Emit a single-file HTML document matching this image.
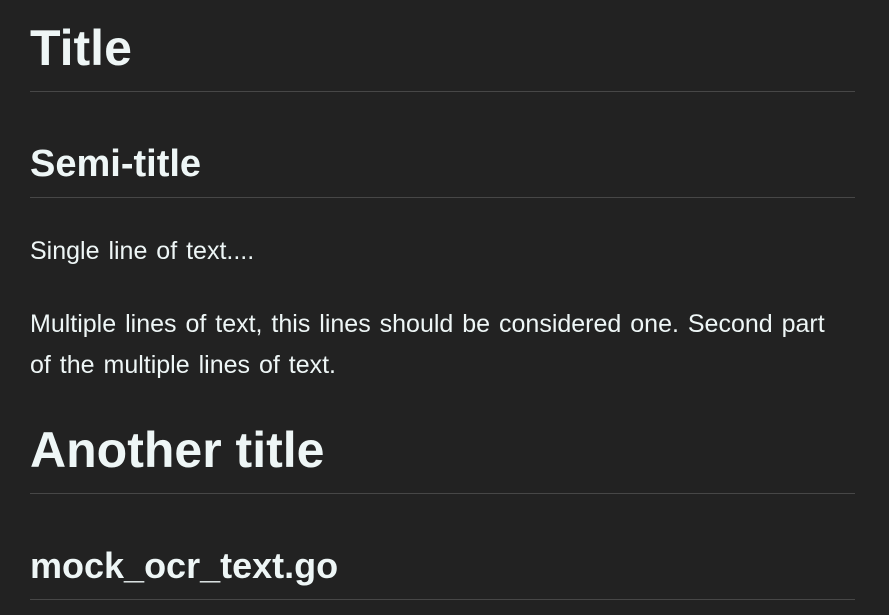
<!DOCTYPE html>
<html><head><meta charset="utf-8"><style>
html,body{margin:0;padding:0;background:#222222;width:889px;height:615px;overflow:hidden;}
body{position:relative;font-family:"Liberation Sans",sans-serif;color:#eef6f6;}
.t{position:absolute;left:30px;white-space:nowrap;margin:0;}
.h1{font-size:50px;font-weight:bold;line-height:56px;}
.h2{font-size:38px;font-weight:bold;line-height:42px;}
.p{font-size:25px;line-height:28px;word-spacing:2px;}
.hr{position:absolute;left:30px;width:825px;height:1px;background:#474747;}
</style></head><body>
<div class="t h1" style="top:20px">Title</div>
<div class="hr" style="top:91px"></div>
<div class="t h2" style="top:143px">Semi-title</div>
<div class="hr" style="top:197px"></div>
<div class="t p" style="top:237px">Single line of text....</div>
<div class="t p" style="top:304px;white-space:normal;width:820px;line-height:41px">Multiple lines of text, this lines should be considered one. Second part of the multiple lines of text.</div>
<div class="t h1" style="top:422px">Another title</div>
<div class="hr" style="top:493px"></div>
<div class="t h2" style="top:545px;font-size:36px">mock_ocr_text.go</div>
<div class="hr" style="top:599px"></div>
</body></html>
